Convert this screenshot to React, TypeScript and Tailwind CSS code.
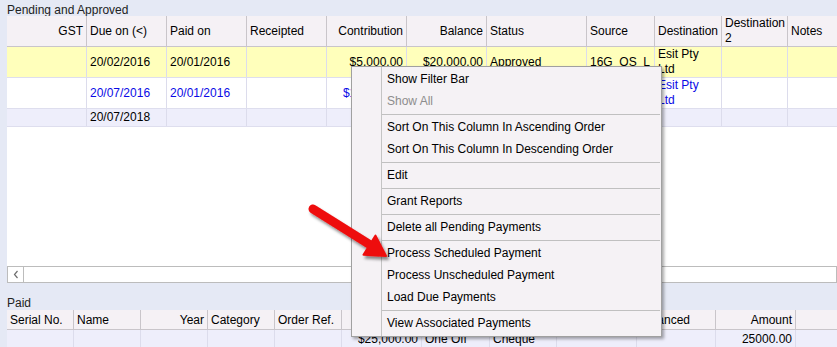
import React from 'react';

interface Col {
  label: string;
  w: string;
  right?: boolean;
}

const topCols: Col[] = [
  { label: 'GST', w: 'w-[80px]', right: true },
  { label: 'Due on (<)', w: 'w-[80px]' },
  { label: 'Paid on', w: 'w-[80px]' },
  { label: 'Receipted', w: 'w-[80px]' },
  { label: 'Contribution', w: 'w-[80px]', right: true },
  { label: 'Balance', w: 'w-[80px]', right: true },
  { label: 'Status', w: 'w-[100px]' },
  { label: 'Source', w: 'w-[68px]' },
  { label: 'Destination', w: 'w-[67px]' },
  { label: 'Destination 2', w: 'w-[66px]' },
  { label: 'Notes', w: 'w-[60px]' },
];

const pendingRows = [
  {
    bg: 'bg-[#FFFFBB]',
    text: 'text-black',
    h: 'h-[31px]',
    cells: ['', '20/02/2016', '20/01/2016', '', '$5,000.00', '$20,000.00', 'Approved', '16G_OS_L', 'Esit Pty\nLtd', '', ''],
  },
  {
    bg: 'bg-white',
    text: 'text-[#0A0AE6]',
    h: 'h-[31px]',
    cells: ['', '20/07/2016', '20/01/2016', '', '$15,000.00', '$10,000.00', 'Approved', '16G_OS_L', 'Esit Pty\nLtd', '', ''],
  },
  {
    bg: 'bg-[#EEEEFB]',
    text: 'text-black',
    h: 'h-[18px]',
    cells: ['', '20/07/2018', '', '', '', '', '', '', '', '', ''],
  },
];

const paidCols: Col[] = [
  { label: 'Serial No.', w: 'w-[67px]' },
  { label: 'Name', w: 'w-[67px]' },
  { label: 'Year', w: 'w-[67px]', right: true },
  { label: 'Category', w: 'w-[67px]' },
  { label: 'Order Ref.', w: 'w-[67px]' },
  { label: 'Amount', w: 'w-[80px]', right: true },
  { label: 'Type', w: 'w-[68px]' },
  { label: 'Method', w: 'w-[67px]' },
  { label: 'Reference', w: 'w-[80px]' },
  { label: 'Balanced', w: 'w-[79px]' },
  { label: 'Amount', w: 'w-[80px]', right: true },
  { label: '', w: 'w-[60px]' },
];

const paidRow = ['', '', '', '', '', '$25,000.00', 'One Off', 'Cheque', '', '', '25000.00', ''];

type MenuEntry = { label: string; disabled?: boolean } | 'sep';

const menu: MenuEntry[] = [
  { label: 'Show Filter Bar' },
  { label: 'Show All', disabled: true },
  'sep',
  { label: 'Sort On This Column In Ascending Order' },
  { label: 'Sort On This Column In Descending Order' },
  'sep',
  { label: 'Edit' },
  'sep',
  { label: 'Grant Reports' },
  'sep',
  { label: 'Delete all Pending Payments' },
  'sep',
  { label: 'Process Scheduled Payment' },
  { label: 'Process Unscheduled Payment' },
  { label: 'Load Due Payments' },
  'sep',
  { label: 'View Associated Payments' },
];

const ContextMenu: React.FC = () => (
  <div className="absolute left-[351px] top-[66px] w-[311px] border border-[#A0A0A0] bg-[#F5F2F5] pt-[1px] pb-[2px] shadow-[2px_2px_3px_rgba(0,0,0,0.35)]">
    <div className="absolute left-[29px] top-0 bottom-0 w-px bg-[#C4C4C4]" />
    {menu.map((m, i) =>
      m === 'sep' ? (
        <div key={i} className="h-[4px] flex items-center pl-[30px] pr-[1px]">
          <div className="h-px w-full bg-[#C0C0C0]" />
        </div>
      ) : (
        <div
          key={i}
          className={`h-[22px] flex items-center pl-[35px] whitespace-nowrap ${m.disabled ? 'text-[#8D8D8D]' : 'text-black'}`}
        >
          {m.label}
        </div>
      )
    )}
  </div>
);

const Arrow: React.FC = () => (
  <svg className="absolute left-[295px] top-[195px]" width="100" height="75" viewBox="0 0 100 75">
    <defs>
      <filter id="sh" x="-20%" y="-20%" width="150%" height="150%">
        <feDropShadow dx="2" dy="3" stdDeviation="1.8" floodColor="#000" floodOpacity="0.45" />
      </filter>
    </defs>
    <g filter="url(#sh)">
      <line x1="18" y1="14" x2="77" y2="51" stroke="#EE0B0B" strokeWidth="9" strokeLinecap="round" />
      <polygon points="91,61 68.5,59.8 80.5,40.6" fill="#EE0B0B" stroke="#EE0B0B" strokeWidth="2" strokeLinejoin="round" />
    </g>
  </svg>
);

const App: React.FC = () => {
  return (
    <div className="relative w-[837px] h-[347px] overflow-hidden bg-[#E5E9F5] font-['Liberation_Sans',Arial,sans-serif] text-[12px] text-black">
      {/* Pending and Approved */}
      <div className="h-[16px] overflow-hidden pl-[7px] pt-[3px] leading-[14px] text-[#222]">Pending and Approved</div>

      <div className="ml-[7px] bg-white h-[267px] flex flex-col">
        <div className="flex h-[31px] bg-[#F5F1F5] border-b border-[#C9C5CA]">
          {topCols.map((c, i) => (
            <div
              key={i}
              className={`${c.w} shrink-0 h-full border-r border-[#C9C5CA] px-[3px] flex items-center overflow-hidden leading-[15px] ${c.right ? 'justify-end text-right' : ''}`}
            >
              <span className="whitespace-normal">{c.label}</span>
            </div>
          ))}
        </div>
        {pendingRows.map((r, ri) => (
          <div key={ri} className={`flex ${r.h} ${r.bg} ${r.text} border-b border-[#DEDEEE]`}>
            {r.cells.map((v, ci) => (
              <div
                key={ci}
                className={`${topCols[ci].w} shrink-0 h-full border-r border-[#DCDCEC] px-[3px] flex items-center overflow-hidden leading-[15px] whitespace-pre-line ${topCols[ci].right ? 'justify-end text-right' : ''}`}
              >
                <span className={ci === 7 ? 'whitespace-nowrap' : ''}>{v}</span>
              </div>
            ))}
          </div>
        ))}
        <div className="flex-1" />
        {/* scrollbar */}
        <div className="h-[17px] border border-[#BCBCBC] bg-white flex">
          <div className="w-[16px] h-full border-r border-[#BCBCBC] flex items-center justify-center">
            <svg width="6" height="9" viewBox="0 0 6 9">
              <path d="M4.5 1 L1.5 4.5 L4.5 8" fill="none" stroke="#6E6E6E" strokeWidth="1.2" />
            </svg>
          </div>
        </div>
      </div>

      {/* Paid */}
      <div className="h-[27px] flex items-end pl-[7px] leading-[14px] text-[#222]">Paid</div>
      <div className="ml-[7px] flex flex-col">
        <div className="flex h-[20px] bg-[#F5F1F5] border-b border-[#C9C5CA]">
          {paidCols.map((c, i) => (
            <div
              key={i}
              className={`${c.w} shrink-0 h-full border-r border-[#C9C5CA] px-[3px] flex items-center overflow-hidden whitespace-nowrap ${c.right ? 'justify-end' : ''}`}
            >
              {c.label}
            </div>
          ))}
        </div>
        <div className="flex h-[18px] bg-[#EEEEFB]">
          {paidRow.map((v, i) => (
            <div
              key={i}
              className={`${paidCols[i].w} shrink-0 h-full border-r border-[#DCDCEC] px-[3px] flex items-center overflow-hidden whitespace-nowrap ${paidCols[i].right ? 'justify-end' : ''}`}
            >
              {v}
            </div>
          ))}
        </div>
      </div>

      <ContextMenu />
      <Arrow />
    </div>
  );
};

export default App;
